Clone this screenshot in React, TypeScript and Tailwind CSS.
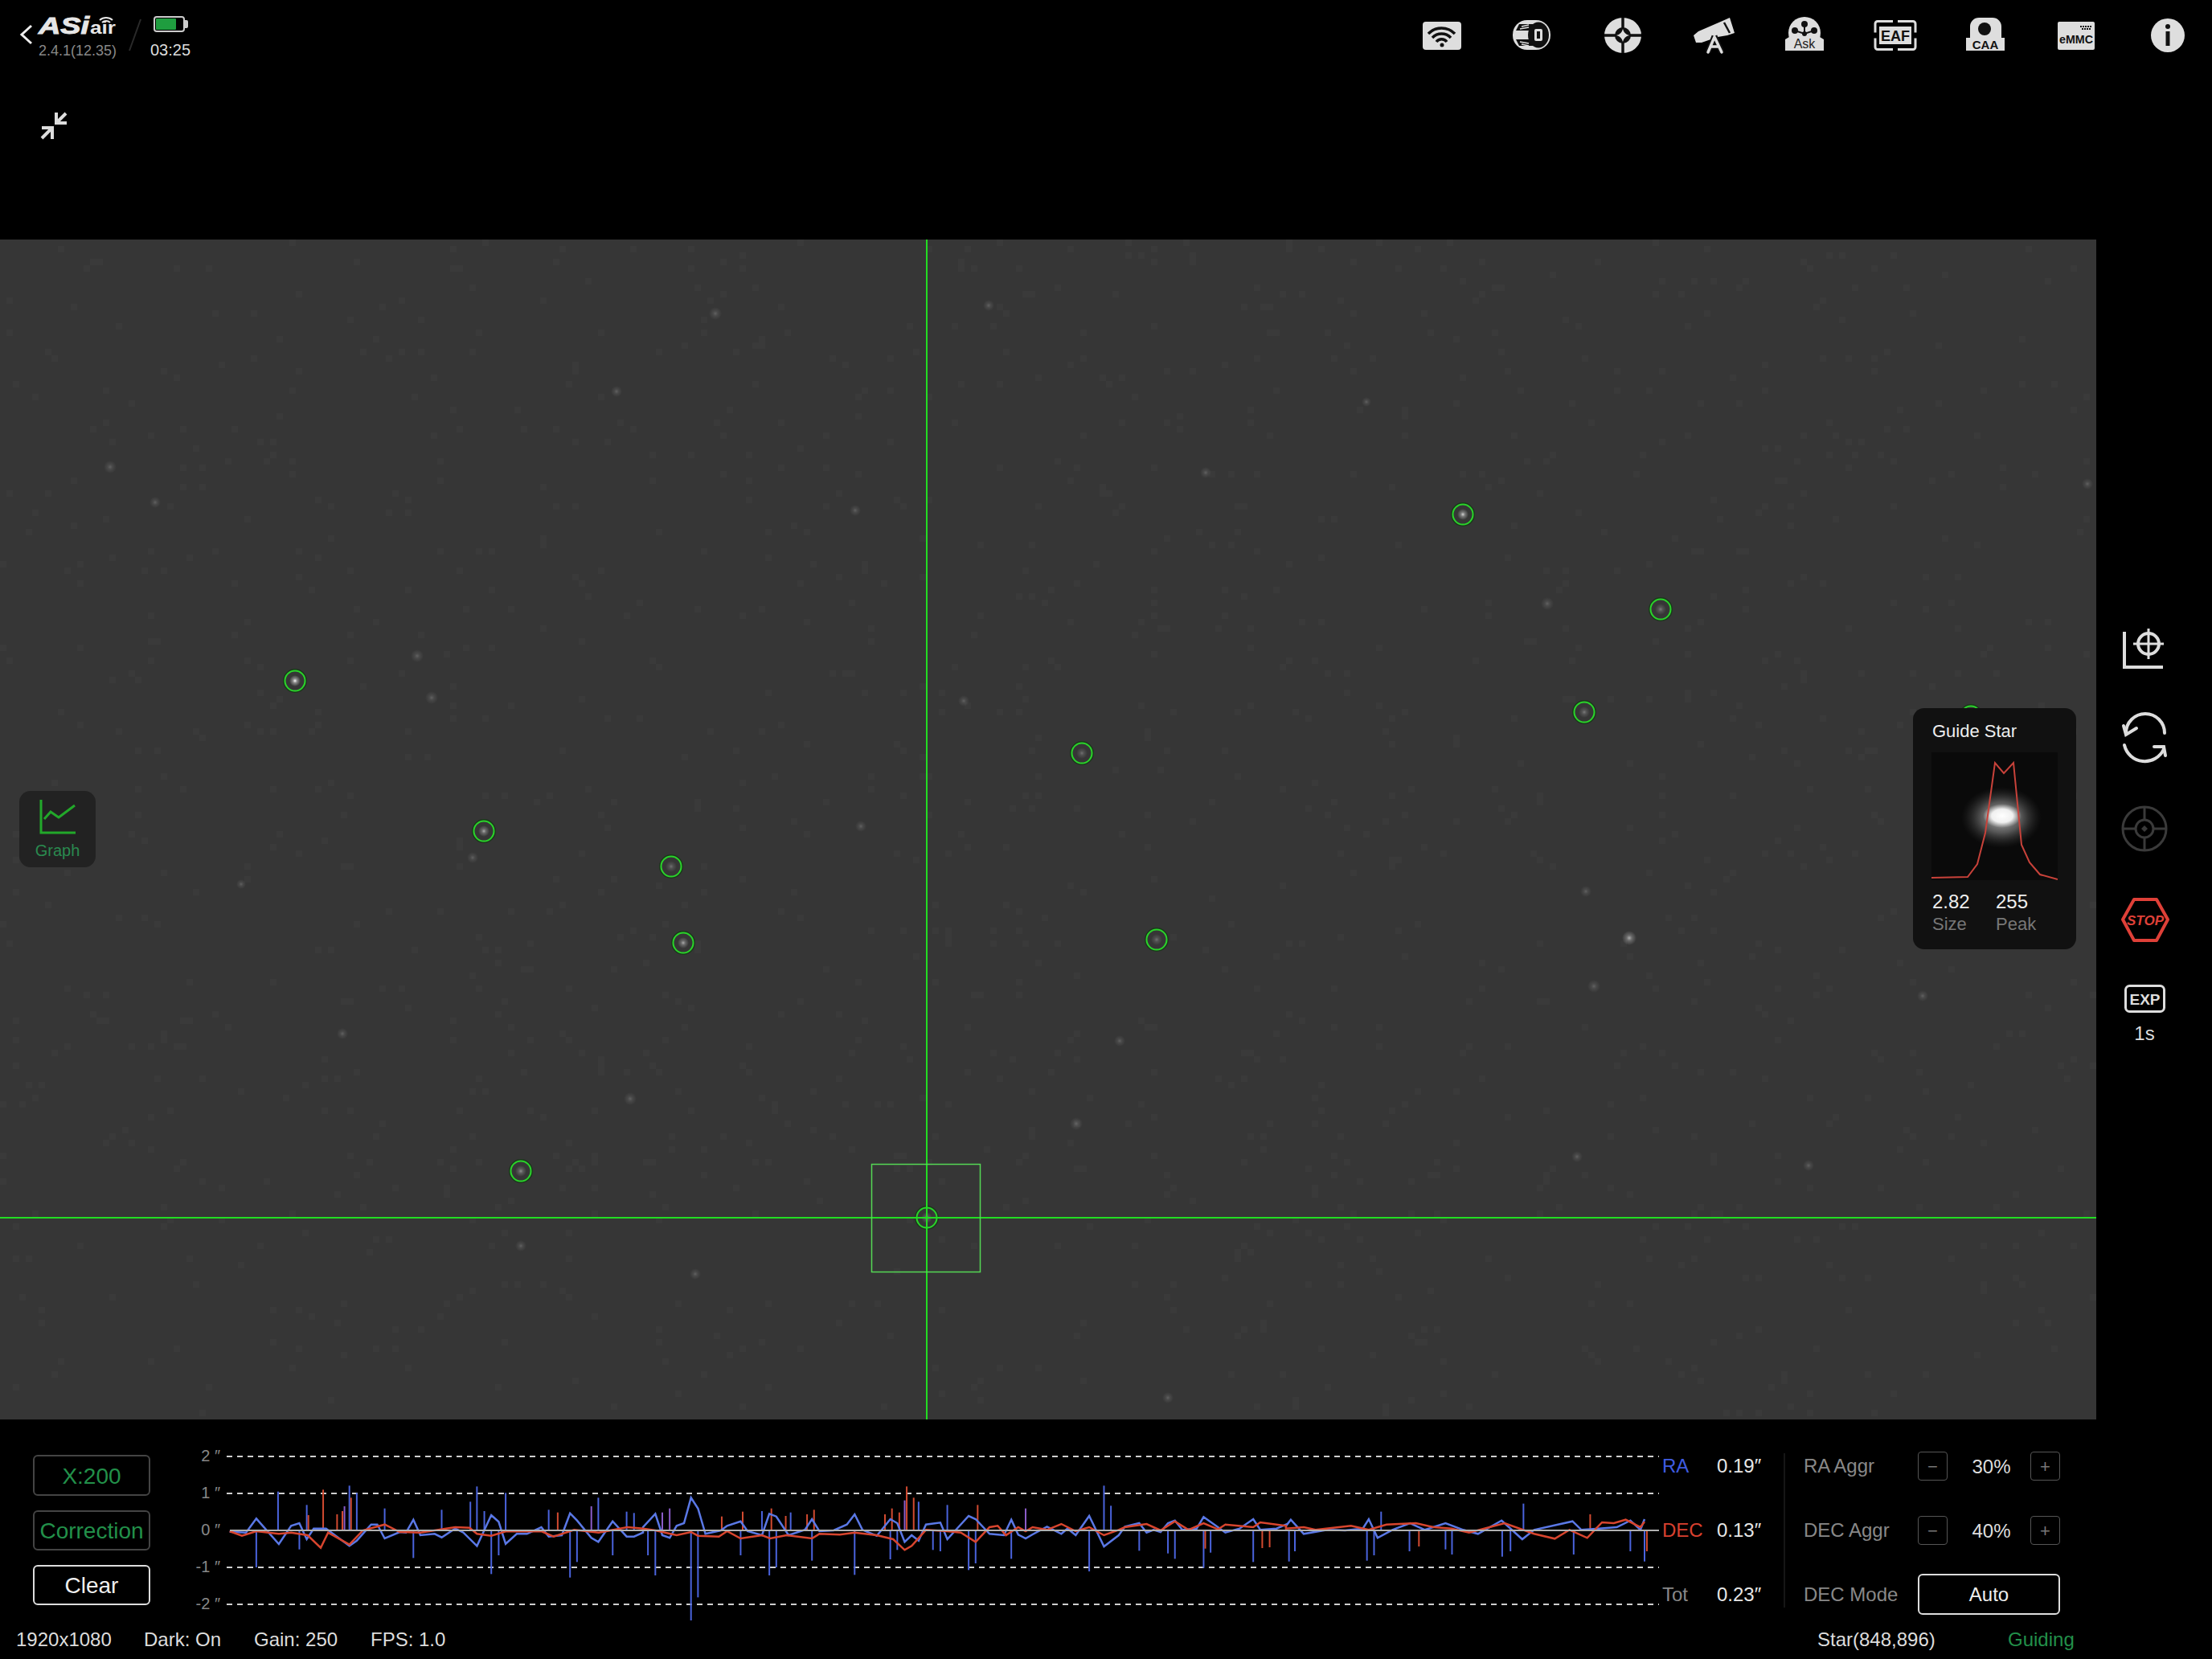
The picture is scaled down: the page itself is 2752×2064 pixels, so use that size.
// ASIAIR guiding screen
const GREEN = '#22dd22'

// green-ringed stars on the frame
const RING_STARS = [
  [367, 847, 1], [602, 1034, 0.6], [835, 1078, 0.3], [850, 1173, 0.6], [648, 1457, 0.45],
  [1346, 937, 0.3], [1439, 1169, 0.3], [1820, 640, 0.8], [2066, 758, 0.35], [1971, 886, 0.35],
  [2452, 891, 0.2], [1153, 1515, 0.4],
]

// faint stars, [x, y, radius]
const FAINT_STARS = [
  [137, 581, 5], [193, 625, 4], [519, 816, 5], [537, 868, 5], [588, 1067, 4], [767, 487, 4], [890, 390, 5],
  [426, 1286, 4], [784, 1367, 5], [1339, 1398, 5], [1393, 1295, 4], [1973, 1109, 4], [1983, 1227, 5],
  [1925, 751, 5], [2597, 602, 4], [1199, 872, 4], [1071, 1028, 4], [1064, 635, 4],
  [1500, 588, 4], [648, 1550, 4], [865, 1585, 4], [1453, 1739, 4], [1962, 1439, 4], [2392, 1239, 4],
  [2462, 974, 4], [1230, 380, 4], [1700, 500, 3], [2250, 1450, 4], [300, 1100, 3],
]

function speckles() {
  let seed = 7
  let d = ''
  for (let i = 0; i < 1500; i++) {
    seed = (seed * 16807) % 2147483647
    const x = (seed % 326) * 8
    seed = (seed * 16807) % 2147483647
    const y = 298 + (seed % 183) * 8
    d += `M${x} ${y}h8v8h-8z`
  }
  return d
}

// chart samples were read from three crops, each with its own x scale
const toX = [(v: number) => v / 1.96, (v: number) => 800 + v / 1.96, (v: number) => 1600 + v / 1.361]
const toY = (v: number) => 1760 + v / 3

const RA_LINE = [
  [560,437,600,440,625,388,680,483,710,415,730,405,748,465,765,425,795,425,830,465,852,490,870,470,905,410,920,410,938,462,975,438,990,440,1008,392,1025,450,1060,445,1077,458,1110,425,1130,440,1163,490,1198,375,1216,400,1233,482,1260,445,1285,445,1320,420,1338,455,1370,450,1390,368,1407,395,1442,460,1459,475,1494,398,1528,455,1546,455,1568,440],
  [0,420,30,370,47,450,65,460,82,415,100,405,117,310,134,350,152,445,190,432,205,415,238,398,255,435,290,450,308,370,325,380,355,450,395,430,412,390,430,435,465,432,497,410,516,372,535,430,570,452,603,390,620,405,638,475,655,450,672,470,690,410,725,403,742,465,794,378,811,390,845,445,880,450,898,392,915,448,933,462,950,447,985,418,1020,445,1035,425,1055,450,1088,378,1124,492,1160,450,1175,418,1210,405,1228,440,1245,430,1262,438,1280,405,1297,395,1315,430,1350,425,1367,382,1402,420,1420,440,1455,425,1488,390,1505,430,1545,425,1568,410],
  [0,415,8,392,30,445,70,430,100,432,130,425,140,390,155,460,180,430,210,405,235,430,270,405,300,430,325,445,365,395,400,465,420,430,485,398,500,430,530,425,560,420,583,395,600,430,607,390],
]
const DEC_LINE = [
  [560,435,590,452,625,435,680,445,710,440,750,450,782,497,800,440,852,485,885,432,938,410,975,438,1025,440,1110,420,1145,422,1163,445,1198,452,1233,436,1320,435,1350,455,1400,430,1460,440,1530,420,1568,425],
  [0,425,30,432,82,450,117,438,134,452,185,455,205,435,238,462,290,450,310,462,350,450,412,462,430,445,480,448,516,440,570,450,610,465,638,505,655,490,690,430,742,435,775,440,811,475,845,420,865,415,885,450,915,420,933,435,950,420,985,430,1020,408,1055,435,1088,420,1124,450,1160,430,1175,420,1228,408,1262,432,1297,398,1330,430,1367,405,1402,428,1420,410,1488,420,1505,402,1568,415],
  [0,425,30,420,50,430,110,415,140,430,170,410,220,405,250,420,280,425,310,440,370,405,420,445,455,463,480,430,510,460,535,402,555,405,575,392,600,420,607,400],
]
// [x, end y, colour]: b blue, r red, p purple
const BARS: [number, number, string][][] = [
  [[625,570,'b'],[678,287,'b'],[730,503,'b'],[748,337,'b'],[752,375,'r'],[788,280,'r'],[822,372,'r'],[835,360,'r'],[840,342,'p'],[852,265,'b'],[856,310,'r'],[870,292,'b'],[938,350,'b'],[1008,535,'b'],[1077,355,'b'],[1147,325,'b'],[1163,268,'b'],[1181,360,'b'],[1198,595,'b'],[1216,525,'b'],[1233,292,'b'],[1338,355,'b'],[1360,365,'r'],[1390,608,'b'],[1407,550,'b'],[1442,342,'p'],[1459,310,'b'],[1494,525,'b'],[1528,362,'b'],[1546,367,'b']],
  [[12,525,'b'],[30,600,'b'],[47,365,'p'],[65,350,'p'],[117,768,'b'],[134,682,'b'],[192,380,'r'],[238,525,'b'],[243,362,'r'],[290,360,'b'],[308,600,'b'],[313,350,'r'],[325,570,'b'],[348,378,'r'],[360,365,'b'],[400,372,'r'],[412,545,'b'],[417,355,'r'],[516,598,'b'],[590,372,'r'],[603,540,'b'],[607,350,'r'],[620,505,'b'],[625,365,'r'],[638,320,'p'],[643,268,'r'],[660,310,'r'],[672,325,'b'],[707,505,'b'],[725,510,'b'],[742,337,'b'],[794,580,'b'],[811,555,'b'],[816,337,'r'],[898,538,'b'],[933,350,'p'],[1088,585,'b'],[1124,265,'b'],[1141,340,'b'],[1210,508,'b'],[1280,518,'b'],[1297,538,'b'],[1367,572,'b'],[1371,500,'r'],[1384,515,'b'],[1488,550,'b'],[1510,498,'r'],[1528,495,'r']],
  [[5,548,'b'],[15,510,'b'],[137,545,'b'],[149,525,'b'],[161,362,'b'],[209,510,'b'],[225,492,'r'],[270,503,'b'],[281,522,'b'],[366,530,'b'],[380,510,'b'],[402,332,'b'],[487,522,'b'],[515,372,'r'],[583,510,'b'],[607,548,'b'],[611,510,'r']],
]
const BAR_COLOR: Record<string, string> = { b: '#4a63dc', r: '#d24a30', p: '#8a5cc8' }

function linePoints(segments: number[][]) {
  let out = ''
  segments.forEach((seg, s) => {
    for (let i = 0; i < seg.length; i += 2) out += `${toX[s](seg[i]).toFixed(1)},${toY(seg[i + 1]).toFixed(1)} `
  })
  return out
}

function Sky() {
  return (
    <svg className="absolute left-0 top-0" width={2608} height={1468} viewBox="0 298 2608 1468">
      <defs>
        <radialGradient id="glow">
          <stop offset="0%" stopColor="#ffffff" />
          <stop offset="40%" stopColor="#c8c8c8" stopOpacity="0.55" />
          <stop offset="100%" stopColor="#c8c8c8" stopOpacity="0" />
        </radialGradient>
      </defs>
      <path d={speckles()} fill="#3a3a3a" />
      {FAINT_STARS.map(([x, y, r]) => (
        <circle key={`${x}-${y}`} cx={x} cy={y} r={r + 3} fill="url(#glow)" opacity={0.22} />
      ))}
      <circle cx={2027} cy={1167} r={9} fill="url(#glow)" opacity={0.6} />
      {RING_STARS.map(([x, y, o]) => (
        <g key={`${x}-${y}`}>
          <circle cx={x} cy={y} r={7} fill="url(#glow)" opacity={o} />
          <circle cx={x} cy={y} r={14} fill="none" stroke="#0f3a0f" strokeWidth={2} opacity={0.7} />
          <circle cx={x} cy={y} r={12.5} fill="none" stroke="#2ad42a" strokeWidth={2} />
        </g>
      ))}
      <line x1={1153} y1={298} x2={1153} y2={1766} stroke={GREEN} strokeWidth={2} />
      <line x1={0} y1={1515} x2={2608} y2={1515} stroke={GREEN} strokeWidth={2} />
      <rect x={1084.5} y={1448.5} width={135} height={134} fill="none" stroke="#55d855" strokeWidth={1.5} />
    </svg>
  )
}

function GuideStarPanel() {
  return (
    <div className="absolute left-[2380px] top-[881px] h-[300px] w-[203px] rounded-[14px] bg-[#111111] text-[#eeeeee]">
      <div className="absolute left-[24px] top-[16px] text-[22px] leading-[26px]">Guide Star</div>
      <svg className="absolute left-[23px] top-[55px]" width={157} height={159} viewBox="2403 936 157 159">
        <defs>
          <radialGradient id="halo">
            <stop offset="0%" stopColor="#c0c0c0" />
            <stop offset="50%" stopColor="#777777" stopOpacity="0.7" />
            <stop offset="100%" stopColor="#333333" stopOpacity="0" />
          </radialGradient>
          <radialGradient id="core">
            <stop offset="0%" stopColor="#ffffff" />
            <stop offset="55%" stopColor="#f0f0f0" />
            <stop offset="100%" stopColor="#cccccc" stopOpacity="0" />
          </radialGradient>
        </defs>
        <rect x={2403} y={936} width={157} height={159} fill="#0a0a0a" />
        <ellipse cx={2490} cy={1017} rx={50} ry={38} fill="url(#halo)" />
        <ellipse cx={2491} cy={1015} rx={24} ry={15} fill="url(#core)" />
        <polyline
          points="2403,1092 2448,1091 2460,1075 2470,1036 2482,949 2493,962 2505,949 2515,1051 2525,1073 2538,1088 2560,1094"
          fill="none"
          stroke="#c8423a"
          strokeWidth={2}
        />
      </svg>
      <div className="absolute left-[24px] top-[227px] flex gap-[32px] leading-[28px]">
        <div className="w-[47px]">
          <div className="text-[24px]">2.82</div>
          <div className="text-[22px] text-[#777777]">Size</div>
        </div>
        <div>
          <div className="text-[24px]">255</div>
          <div className="text-[22px] text-[#777777]">Peak</div>
        </div>
      </div>
    </div>
  )
}

function TopLeft() {
  return (
    <>
      <svg className="absolute left-0 top-0" width={260} height={190} viewBox="0 0 260 190">
        <polyline points="39,32 27,43 39,54" fill="none" stroke="#eeeeee" strokeWidth={3} />
        <text x={48} y={42} fontSize={30} fontWeight={700} fontStyle="italic" fill="#e6e6e6" stroke="#e6e6e6" strokeWidth={1} textLength={63} lengthAdjust="spacingAndGlyphs">
          ASi
        </text>
        <text x={112} y={42} fontSize={22} fontWeight={700} fill="#e6e6e6" textLength={32} lengthAdjust="spacingAndGlyphs">
          air
        </text>
        <path d="M124 25a12 12 0 0 1 16 0M127 28a7 7 0 0 1 10 0" fill="none" stroke="#e6e6e6" strokeWidth={2} />
        <line x1={175} y1={24} x2={161} y2={63} stroke="#2a2a2a" strokeWidth={2} />
        <rect x={192} y={21} width={37} height={18} rx={3} fill="#000000" stroke="#cccccc" strokeWidth={2} />
        <rect x={194} y={23} width={25} height={14} rx={1} fill="#1f9d3f" />
        <path d="M230 25h2a2 2 0 0 1 2 2v6a2 2 0 0 1-2 2h-2z" fill="#cccccc" />
        <g fill="none" stroke="#dddddd" strokeWidth={4}>
          <path d="M70 140v13h13M70 153l12-12" />
          <path d="M52 159h13v14M65 159l-13 13" />
        </g>
      </svg>
      <div className="absolute left-[48px] top-[52px] text-[18px] leading-[22px] text-[#888888]">2.4.1(12.35)</div>
      <div className="absolute left-[187px] top-[50px] text-[20px] leading-[24px] text-[#dddddd]">03:25</div>
    </>
  )
}

function TopIcons() {
  return (
    <svg className="absolute left-[1760px] top-0" width={992} height={80} viewBox="1760 0 992 80">
      <g fill="#dedede">
        {/* wifi */}
        <rect x={1770} y={27} width={48} height={35} rx={4} />
        <g fill="none" stroke="#111111" strokeWidth={3.5}>
          <path d="M1777 42a23 23 0 0 1 33 0" />
          <path d="M1782 47a16 16 0 0 1 23 0" />
          <path d="M1787 52a8 8 0 0 1 13 0" />
        </g>
        <circle cx={1794} cy={56} r={2.5} fill="#111111" />

        {/* filter wheel */}
        <rect x={1882} y={25} width={47} height={37} rx={18} />
        <path d="M1890 30h17v8h-21zM1886 49h21v8h-17z" fill="#111111" />
        <path d="M1893 33l9-2M1891 36l11-2M1891 52l11 2M1893 55l9 2" stroke="#dedede" strokeWidth={1.5} />
        <ellipse cx={1914} cy={43.5} rx={13} ry={16} fill="#111111" />
        <rect x={1909} y={36} width={10} height={15} rx={2} fill="#dedede" />
        <rect x={1912} y={39} width={4} height={9} fill="#111111" />

        {/* guider */}
        <ellipse cx={2019} cy={44} rx={23} ry={22} />
        <path d="M1996 44h46M2019 22v44" stroke="#111111" strokeWidth={3.5} />
        <circle cx={2019} cy={44} r={10} fill="#111111" />
        <path d="M2019 36q1.500 6.500 8 8q-6.500 1.500-8 8q-1.500-6.500-8-8q6.500-1.500 8-8z" />

        {/* telescope */}
        <path d="M2107 44l6-5 30-13 9-4 6 19-9 3-12 2-20 7-7 0z" />
        <path d="M2145 28l7 13" stroke="#111111" strokeWidth={2.500} />
        <path d="M2133 45l-8 20M2133 45l9 20" fill="none" stroke="#111111" strokeWidth={7} />
        <path d="M2133 46l-8 19M2133 46l9 19M2128 58h10" fill="none" stroke="#dedede" strokeWidth={3.5} strokeLinecap="round" />

        {/* ASK */}
        <circle cx={2245} cy={41} r={20} />
        <path d="M2221 63v-14l5-3h38l5 3v14z" />
        <path d="M2245 30v12M2233 38l12 4 12-4" stroke="#111111" strokeWidth={2} />
        <circle cx={2245} cy={30} r={4} fill="#111111" />
        <circle cx={2233} cy={38} r={4} fill="#111111" />
        <circle cx={2257} cy={38} r={4} fill="#111111" />
        <circle cx={2245} cy={42} r={3} fill="#111111" />
        <text x={2245} y={60} fontSize={16} textAnchor="middle" fill="#222222">Ask</text>

        {/* EAF */}
        <path d="M2355 26.500h-19a3 3 0 0 0-3 3v11M2361 26.500h19a3 3 0 0 1 3 3v11M2355 61.500h-19a3 3 0 0 1-3-3v-11M2361 61.500h19a3 3 0 0 0 3-3v-11" fill="none" stroke="#dedede" strokeWidth={3} />
        <rect x={2338} y={33} width={40} height={22} />
        <text x={2358} y={51} fontSize={18} fontWeight={700} textAnchor="middle" fill="#111111">EAF</text>

        {/* CAA */}
        <path d="M2451 47v-14a11 11 0 0 1 11-11h17a11 11 0 0 1 11 11v14h4v16h-48v-16z" />
        <circle cx={2469} cy={36} r={8} fill="#111111" />
        <text x={2470} y={61} fontSize={15} fontWeight={700} textAnchor="middle" fill="#111111">CAA</text>

        {/* eMMC */}
        <rect x={2560} y={27} width={46} height={35} rx={2} />
        <path d="M2588 33h14M2590 36h12" stroke="#111111" strokeWidth={2} strokeDasharray="2 1" />
        <text x={2583} y={54} fontSize={15} fontWeight={700} textAnchor="middle" fill="#111111" textLength={42} lengthAdjust="spacingAndGlyphs">eMMC</text>

        {/* info */}
        <circle cx={2697} cy={44} r={21} />
        <circle cx={2697} cy={33} r={3} fill="#111111" />
        <rect x={2694.500} y={39} width={5} height={18} fill="#111111" />
      </g>
    </svg>
  )
}

function SideIcons() {
  return (
    <svg className="absolute left-[2608px] top-[770px]" width={144} height={500} viewBox="2608 770 144 500">
      <g fill="none" stroke="#dddddd" strokeWidth={4}>
        <path d="M2643 786v44h48" />
        <circle cx={2673} cy={801} r={13} />
        <path d="M2673 782v38M2654 801h38" strokeWidth={3} />

        <path d="M2693 912a24 24 0 0 0-48 0" strokeLinecap="round" />
        <path d="M2642 903l3 11 13-8" strokeLinecap="round" />
        <path d="M2643 927a26 26 0 0 0 49 5" strokeLinecap="round" />
        <path d="M2680 929l12 0 2 11" strokeLinecap="round" />
      </g>
      <g fill="none" stroke="#3a3a3a" strokeWidth={3}>
        <circle cx={2668} cy={1031} r={27} />
        <circle cx={2668} cy={1031} r={11} />
        <path d="M2668 1004v16M2668 1042v16M2641 1031h16M2679 1031h16" />
        <path d="M2668 1027l4 4-4 4-4-4z" fill="#3a3a3a" stroke="none" />
      </g>
      <polygon points="2641,1144 2655,1119 2683,1119 2697,1144 2683,1170 2655,1170" fill="none" stroke="#df4038" strokeWidth={4} strokeLinejoin="round" />
      <text x={2669} y={1151} fontSize={17} fontWeight={700} fontStyle="italic" textAnchor="middle" fill="#df4038">STOP</text>
      <rect x={2644.500} y={1226.500} width={48} height={32} rx={5} fill="none" stroke="#dddddd" strokeWidth={3} />
      <text x={2668.500} y={1249.500} fontSize={19} fontWeight={700} textAnchor="middle" fill="#dddddd">EXP</text>
    </svg>
  )
}

function GuideChart() {
  const rows = [1812, 1858, 1950, 1996]
  return (
    <svg className="absolute left-[280px] top-[1790px]" width={1790} height={240} viewBox="280 1790 1790 240">
      {rows.map((y) => (
        <line key={y} x1={282} y1={y} x2={2064} y2={y} stroke="#cfcfcf" strokeWidth={2} strokeDasharray="7 6" />
      ))}
      {BARS.map((seg, s) =>
        seg.map(([x, y, c]) => (
          <line key={`${s}-${x}`} x1={toX[s](x)} y1={1904} x2={toX[s](x)} y2={toY(y)} stroke={BAR_COLOR[c]} strokeWidth={2} />
        ))
      )}
      <polyline points={linePoints(RA_LINE)} fill="none" stroke="#5a78e6" strokeWidth={2.5} />
      <polyline points={linePoints(DEC_LINE)} fill="none" stroke="#d8452e" strokeWidth={2.5} />
      <line x1={286} y1={1904} x2={2064} y2={1904} stroke="#b0b0b0" strokeWidth={2} />
    </svg>
  )
}

const AXIS = [['2 ″', 1811], ['1 ″', 1857], ['0 ″', 1903], ['-1 ″', 1949], ['-2 ″', 1995]] as const

function Stepper({ top, value }: { top: string; value: string }) {
  return (
    <div className={`absolute left-[2386px] flex h-[36px] w-[177px] items-center justify-between ${top}`}>
      <div className="flex h-full w-[37px] items-center justify-center rounded-[4px] border border-[#555555] text-[22px] text-[#777777]">−</div>
      <div className="pl-[6px] pt-[1px] text-[24px] text-[#dddddd]">{value}</div>
      <div className="flex h-full w-[37px] items-center justify-center rounded-[4px] border border-[#555555] text-[22px] text-[#777777]">+</div>
    </div>
  )
}

export default function App() {
  return (
    <div className="relative h-[2064px] w-[2752px] overflow-hidden bg-black [font-family:Liberation_Sans,Arial,sans-serif]">
      <TopLeft />
      <TopIcons />

      <div className="absolute left-0 top-[298px] h-[1468px] w-[2608px] bg-[#363636]">
        <Sky />
      </div>

      {/* graph toggle */}
      <div className="absolute left-[24px] top-[984px] flex h-[95px] w-[95px] flex-col items-center rounded-[14px] bg-[#222222]">
        <svg className="mt-[10px]" width={46} height={44} viewBox="51 994 46 44" fill="none" stroke="#22a82a" strokeWidth={3}>
          <path d="M53 995v41h43" />
          <path d="M57 1019l8-9 10 7 20-15" />
        </svg>
        <div className="mt-[8px] text-[20px] leading-[24px] text-[#2a8a4f]">Graph</div>
      </div>

      <GuideStarPanel />
      <SideIcons />
      <div className="absolute left-[2608px] top-[1272px] w-[120px] text-center text-[24px] leading-[28px] text-[#dddddd]">1s</div>

      <GuideChart />

      <div className="absolute left-[41px] top-[1810px] flex w-[146px] flex-col gap-[18px] text-center text-[28px]">
        <div className="flex h-[51px] items-center justify-center rounded-[6px] border-2 border-[#444444] pt-[2px] text-[#22904a]">X:200</div>
        <div className="flex h-[50px] items-center justify-center rounded-[6px] border-2 border-[#444444] pt-[2px] text-[#22904a]">Correction</div>
        <div className="flex h-[50px] items-center justify-center rounded-[6px] border-2 border-[#dddddd] pt-[2px] text-[#eeeeee]">Clear</div>
      </div>

      {AXIS.map(([label, y]) => (
        <div key={label} className="absolute left-[220px] w-[54px] -translate-y-1/2 text-right text-[20px] leading-[24px] text-[#888888]" style={{ top: y }}>
          {label}
        </div>
      ))}

      <div className="absolute left-[2068px] top-[1810px] grid grid-cols-[68px_70px] grid-rows-[28px_28px_28px] gap-y-[52px] text-[24px] leading-[28px]">
        <div className="text-[#3f5ce0]">RA</div>
        <div className="text-[#e6e6e6]">0.19″</div>
        <div className="text-[#d8402f]">DEC</div>
        <div className="text-[#e6e6e6]">0.13″</div>
        <div className="text-[#888888]">Tot</div>
        <div className="text-[#e6e6e6]">0.23″</div>
      </div>

      <div className="absolute left-[2219px] top-[1808px] h-[192px] w-[2px] bg-[#161616]" />

      <div className="absolute left-[2244px] top-[1810px] text-[24px] leading-[28px] text-[#888888]">RA Aggr</div>
      <div className="absolute left-[2244px] top-[1890px] text-[24px] leading-[28px] text-[#888888]">DEC Aggr</div>
      <div className="absolute left-[2244px] top-[1970px] text-[24px] leading-[28px] text-[#888888]">DEC Mode</div>
      <Stepper top="top-[1806px]" value="30%" />
      <Stepper top="top-[1886px]" value="40%" />
      <div className="absolute left-[2386px] top-[1958px] flex h-[51px] w-[177px] items-center justify-center rounded-[6px] border-2 border-[#dddddd] text-[24px] text-[#eeeeee]">Auto</div>

      <div className="absolute left-0 top-[2026px] h-[28px] w-[2752px] text-[24px] leading-[28px] text-[#dddddd]">
        <span className="absolute left-[20px]">1920x1080</span>
        <span className="absolute left-[179px]">Dark: On</span>
        <span className="absolute left-[316px]">Gain: 250</span>
        <span className="absolute left-[461px]">FPS: 1.0</span>
        <span className="absolute left-[2261px]">Star(848,896)</span>
        <span className="absolute left-[2498px] text-[#22904a]">Guiding</span>
      </div>
    </div>
  )
}
